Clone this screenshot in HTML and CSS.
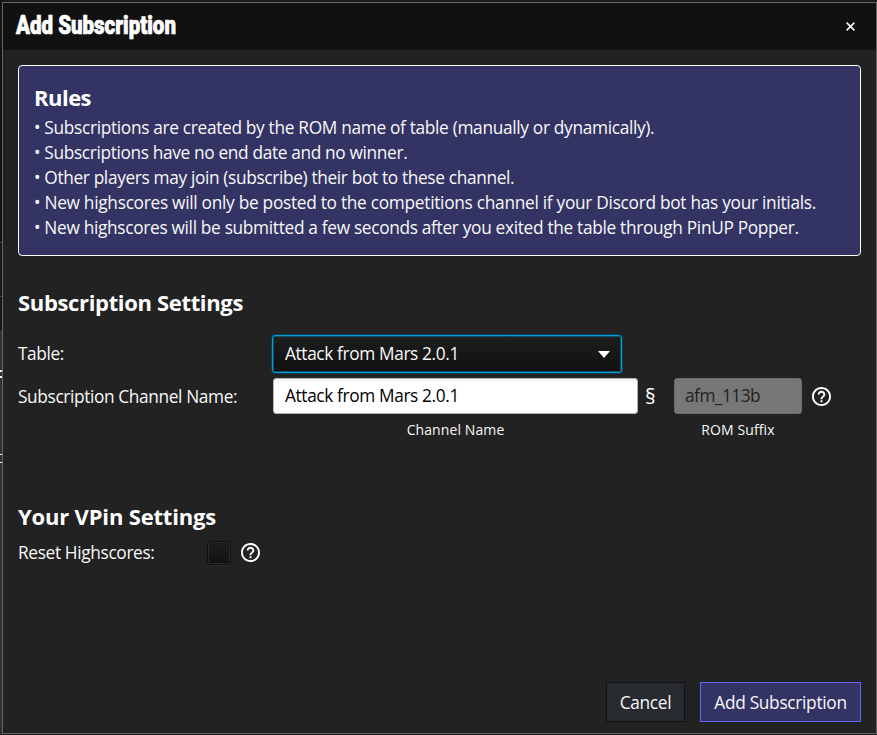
FILE: index.html
```html
<!DOCTYPE html>
<html lang="en">
<head>
<meta charset="utf-8">
<title>Add Subscription</title>
<link rel="stylesheet" href="styles.css">
</head>
<body>
<div class="backdrop"><i class="glyph-edge"></i><i class="icon-edge"></i></div>
<main class="dialog">
  <header class="titlebar">
    <h1><span class="t title">Add Subscription</span></h1>
    <svg class="close" viewBox="0 0 9 9"><path d="M.6.6 8.4 8.4M8.4.6.6 8.4"/></svg>
  </header>
  <section class="rules">
    <h2><span class="t h-rules">Rules</span></h2>
    <p><span class="t r1">• Subscriptions are created by the ROM name of table (manually or dynamically).</span></p>
    <p><span class="t r2">• Subscriptions have no end date and no winner.</span></p>
    <p><span class="t r3">• Other players may join (subscribe) their bot to these channel.</span></p>
    <p><span class="t r4">• New highscores will only be posted to the competitions channel if your Discord bot has your initials.</span></p>
    <p><span class="t r5">• New highscores will be submitted a few seconds after you exited the table through PinUP Popper.</span></p>
  </section>
  <section class="settings">
    <h2><span class="t h-sub">Subscription Settings</span></h2>
    <div class="row row-table">
      <label><span class="t l-table">Table:</span></label>
      <div class="combo"><span class="t value">Attack from Mars 2.0.1</span><svg class="arrow" viewBox="0 0 12 7"><path d="M0 0h12L6 7z"/></svg></div>
    </div>
    <div class="row row-channel">
      <label><span class="t l-chan">Subscription Channel Name:</span></label>
      <div class="field channel"><div class="input"><span class="t value">Attack from Mars 2.0.1</span></div><small><span class="t caption">Channel Name</span></small></div>
      <span class="section-sign">§</span>
      <div class="field suffix"><div class="input disabled"><span class="t rom">afm_113b</span></div><small><span class="t caption">ROM Suffix</span></small></div>
      <svg class="help" viewBox="2 2 20 20"><path d="M11 18h2v-2h-2v2zm1-16C6.48 2 2 6.48 2 12s4.48 10 10 10 10-4.48 10-10S17.52 2 12 2zm0 18c-4.41 0-8-3.59-8-8s3.59-8 8-8 8 3.59 8 8-3.59 8-8 8zm0-14c-2.21 0-4 1.79-4 4h2c0-1.100.9-2 2-2s2 .9 2 2c0 2-3 1.750-3 5h2c0-2.250 3-2.500 3-5 0-2.210-1.790-4-4-4z"/></svg>
    </div>
  </section>
  <section class="vpin">
    <h2><span class="t h-vpin">Your VPin Settings</span></h2>
    <div class="row row-reset">
      <label><span class="t l-reset">Reset Highscores:</span></label>
      <span class="checkbox"></span>
      <svg class="help" viewBox="2 2 20 20"><path d="M11 18h2v-2h-2v2zm1-16C6.48 2 2 6.48 2 12s4.48 10 10 10 10-4.48 10-10S17.52 2 12 2zm0 18c-4.41 0-8-3.59-8-8s3.59-8 8-8 8 3.59 8 8-3.59 8-8 8zm0-14c-2.21 0-4 1.79-4 4h2c0-1.100.9-2 2-2s2 .9 2 2c0 2-3 1.750-3 5h2c0-2.250 3-2.500 3-5 0-2.210-1.790-4-4-4z"/></svg>
    </div>
  </section>
  <footer class="actions">
    <button class="cancel"><span class="t">Cancel</span></button>
    <button class="primary"><span class="t">Add Subscription</span></button>
  </footer>
</main>
</body>
</html>
```
FILE: styles.css
```css
* { box-sizing: border-box; }
html, body { margin: 0; height: 735px; overflow: hidden; }
body {
  display: grid;
  grid-template-columns: 2px 875px;
  background: #1b1b1b;
  font-family: "Open Sans", "Noto Sans", sans-serif;
  font-size: 17.3px;
  color: #f8f8f8;
}
h1, h2, p { margin: 0; }
.t { display: inline-block; white-space: nowrap; }
.title { transform: scaleX(.82); transform-origin: left; -webkit-text-stroke: .7px #fff; }
.h-rules { letter-spacing: -.52px; }
.h-sub { letter-spacing: -.34px; }
.h-vpin { letter-spacing: -.18px; }
.r1, .r5 { letter-spacing: -.32px; }
.r2, .r3 { letter-spacing: -.35px; }
.r4 { letter-spacing: -.285px; }
.l-table { letter-spacing: -.42px; }
.l-chan, .value { letter-spacing: -.37px; }
.l-reset { letter-spacing: -.35px; }
.rom { letter-spacing: -.52px; }
.caption { letter-spacing: .1px; }
.backdrop {
  position: relative;
  background: linear-gradient(#171313 0 242px, #444 242px 243px, #171717 243px 296px, #444 296px 297px, #151515 297px 330px, #2b3538 330px);
}
.glyph-edge { position: absolute; left: 0; top: 370px; width: 2px; height: 8px; border-block: 2px solid #fff; }
.icon-edge { position: absolute; left: 0; top: 454px; width: 2px; height: 9px; border-block: 1px solid #fff; }
.dialog {
  display: flex;
  flex-direction: column;
  width: 875px;
  height: 732px;
  margin-top: 2px;
  border: 1px solid #666;
  background: #222;
}
.titlebar {
  display: flex;
  align-items: center;
  justify-content: space-between;
  height: 47px;
  padding: 0 21px 0 13px;
  background: #111;
}
h1 { margin-top: -1px; font: 900 25px/40px Roboto, sans-serif; color: #fff; }
.close { width: 9px; height: 9px; stroke: #fff; stroke-width: 1.5; }
.rules {
  height: 191px;
  margin: 15px 15px 0;
  padding: 15px 15px;
  border: 1px solid #fff;
  border-radius: 4px;
  background: #333364;
}
.rules p { height: 25px; line-height: 25px; }
h2 { font-size: 22px; line-height: 32px; font-weight: 700; color: #fff; }
.rules h2 { height: 34px; }
.settings, .vpin { padding: 0 15px; }
.settings { height: 244px; padding-top: 30px; }
.row { display: flex; }
.row label { line-height: 36px; }
.row-table label, .row-channel label { width: 255px; }
.row-table { margin-top: 18px; height: 42px; }
.row-channel label { padding-top: 1px; }
.combo {
  display: flex;
  align-items: center;
  justify-content: space-between;
  width: 350px;
  height: 38px;
  margin: -1px 0 0 -1px;
  padding: 0 11px 1px 12px;
  border: 1px solid #039ed3;
  border-radius: 3px;
  box-shadow: inset 0 0 0 1px #0a4f69, 0 0 0 1px #0a3d50;
  background: linear-gradient(#1e1e1e, #101010);
}
.arrow { width: 12px; height: 7px; margin-top: 1px; fill: #fff; }
.field { display: flex; flex-direction: column; align-items: center; }
.channel { width: 365px; }
.suffix { width: 128px; }
.input {
  width: 100%;
  height: 36px;
  padding-left: 11px;
  border: 1px solid #b5b5b5;
  border-radius: 3px;
  background: linear-gradient(#f2f2f2, #fff 5px);
  color: #000;
  line-height: 34px;
}
.input.disabled { border-color: #6a6a6a; background: #777; color: #222; padding-left: 10px; }
small { font-size: 14px; line-height: 32px; }
.section-sign { width: 36px; padding-left: 7px; font-size: 21px; line-height: 36px; color: #fff; }
.help { width: 19px; height: 19px; fill: #fff; margin: 9px 0 0 10px; }
.row-reset label { width: 189px; }
.row-reset { margin-top: 3px; }
.checkbox {
  width: 24px;
  height: 24px;
  margin-top: 6px;
  border: 1px solid #111;
  border-radius: 3px;
  background: linear-gradient(#1c1c1c, #121212);
  box-shadow: inset 0 0 0 1px #292929, 0 1px #2d2d2d;
}
.row-reset .help { margin-top: 8px; }
.actions { display: flex; justify-content: flex-end; gap: 15px; margin-top: auto; padding: 0 15px 11px; }
button {
  height: 40px;
  padding: 0;
  border: 1px solid #111;
  background: #272a2f;
  color: #f8f8f8;
  font: 17.3px "Open Sans", sans-serif;
  letter-spacing: -.3px;
}
.cancel { width: 79px; }
.primary { width: 161px; border-color: #6666ff; background: #333364; }
```
